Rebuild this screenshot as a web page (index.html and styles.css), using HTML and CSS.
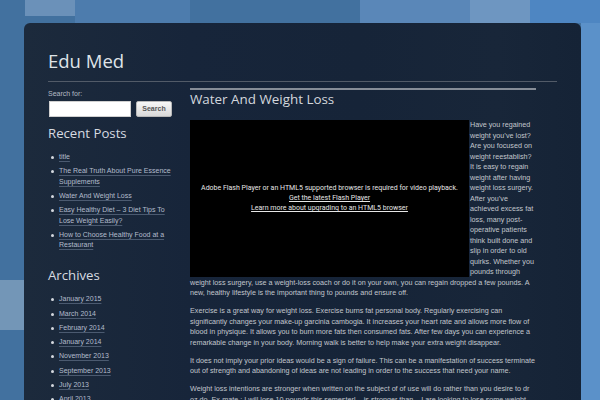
FILE: index.html
```html
<!DOCTYPE html>
<html>
<head>
<meta charset="utf-8">
<link rel="stylesheet" href="styles.css">
</head>
<body>
<div class="page">
  <header class="site-header">
    <h1 class="site-title">Edu Med</h1>
  </header>
  <div class="columns">
    <aside class="sidebar">
      <form class="search">
        <label class="search-label">Search for:</label>
        <div class="search-row">
          <input class="search-input" type="text">
          <button class="search-btn" type="button">Search</button>
        </div>
      </form>
      <h3 class="widget-title">Recent Posts</h3>
      <ul class="widget-list">
        <li><a href="#">title</a></li>
        <li><a href="#">The Real Truth About Pure Essence Supplements</a></li>
        <li><a href="#">Water And Weight Loss</a></li>
        <li><a href="#">Easy Healthy Diet – 3 Diet Tips To Lose Weight Easily?</a></li>
        <li><a href="#">How to Choose Healthy Food at a Restaurant</a></li>
      </ul>
      <h3 class="widget-title">Archives</h3>
      <ul class="widget-list">
        <li><a href="#">January 2015</a></li>
        <li><a href="#">March 2014</a></li>
        <li><a href="#">February 2014</a></li>
        <li><a href="#">January 2014</a></li>
        <li><a href="#">November 2013</a></li>
        <li><a href="#">September 2013</a></li>
        <li><a href="#">July 2013</a></li>
        <li><a href="#">April 2013</a></li>
      </ul>
    </aside>
    <main class="main">
      <h2 class="post-title">Water And Weight Loss</h2>
      <div class="post-body">
        <div class="video">
          <div class="video-msg">
            <div>Adobe Flash Player or an HTML5 supported browser is required for video playback.</div>
            <div><a href="#">Get the latest Flash Player </a></div>
            <div><a href="#">Learn more about upgrading to an HTML5 browser</a></div>
          </div>
        </div>
        <p>Have you regained weight you’ve lost? Are you focused on weight reestablish? It is easy to regain weight after having weight loss surgery. After you’ve achieved excess fat loss, many post-operative patients think built done and slip in order to old quirks. Whether you pounds through weight loss surgery, use a weight-loss coach or do it on your own, you can regain dropped a few pounds. A new, healthy lifestyle is the important thing to pounds and ensure off.</p>
        <p>Exercise is a great way for weight loss. Exercise burns fat personal body. Regularly exercising can significantly changes your make-up garcinia cambogia. It increases your heart rate and allows more flow of blood in physique. It allows you to burn more fats then consumed fats. After few days you can experience a remarkable change in your body. Morning walk is better to help make your extra weight disappear.</p>
        <p>It does not imply your prior ideas would be a sign of failure. This can be a manifestation of success terminate out of strength and abandoning of ideas are not leading in order to the success that need your name.</p>
        <p>Weight loss intentions are stronger when written on the subject of of use will do rather than you desire to dr oz do. Ex-mate.: I will lose 10 pounds this semester! – is stronger than – I are looking to lose some weight this semester.</p>
      </div>
    </main>
  </div>
</div>
</body>
</html>
```
FILE: styles.css
```css
html, body {
  margin: 0;
  padding: 0;
  height: 100%;
  overflow: hidden;
}
body {
  background-color: #42719f;
  background-image:
    linear-gradient(#6b91b9, #6b91b9),
    linear-gradient(#4d7cad, #4d7cad),
    linear-gradient(#5a87b8, #5a87b8),
    linear-gradient(#6e96c1, #6e96c1),
    linear-gradient(#7396b7, #7396b7),
    linear-gradient(#4e86c2, #4e86c2),
    linear-gradient(#5b91c9, #5b91c9);
  background-size:
    50px 16px,
    115px 23px,
    110px 23px,
    60px 23px,
    24px 50px,
    70px 23px,
    19px 400px;
  background-position:
    25px 0,
    75px 0,
    360px 0,
    470px 0,
    0 280px,
    530px 0,
    581px 0;
  background-repeat: no-repeat;
  font-family: "Liberation Sans", Arial, sans-serif;
  color: #c2c6cd;
}
.page {
  margin: 23px 0 0 24px;
  width: 509px;
  height: 420px;
  padding: 0 24px;
  border-radius: 6px 6px 0 0;
  background: linear-gradient(90deg, #1c2a3c 0%, #17253a 30%, #162438 60%, #182639 85%, #152336 100%);
}
.site-header {
  padding-top: 28px;
  padding-bottom: 11px;
  border-bottom: 1px solid #525b68;
}
.site-title {
  margin: 0;
  font-family: "Open Sans", "DejaVu Sans", sans-serif;
  font-weight: 400;
  font-size: 18.5px;
  line-height: 19px;
  color: #dfe3e8;
}
.columns {
  display: flex;
  gap: 18px;
  margin-top: 6px;
}
.sidebar {
  width: 124px;
  flex: none;
  font-size: 7px;
  line-height: 10.5px;
  padding-top: 0.5px;
}
.search-label {
  display: block;
  color: #b4bac4;
}
.search-row {
  display: flex;
  gap: 5px;
  margin-top: 1.5px;
}
.search-input {
  width: 82px;
  height: 16px;
  box-sizing: border-box;
  margin: 0 0 0 1px;
  border: 1px solid #d0d0d0;
  background: #fff;
  padding: 0;
}
.search-btn {
  width: 36px;
  height: 16px;
  box-sizing: border-box;
  margin: 0;
  padding: 0;
  border: 1px solid #b8b8b8;
  border-radius: 2px;
  background: linear-gradient(#f7f7f7, #d9d9d9);
  font-family: "Liberation Sans", Arial, sans-serif;
  font-size: 7px;
  font-weight: bold;
  color: #555;
}
.widget-title {
  margin: 8px 0 11.3px;
  font-family: "Open Sans", "DejaVu Sans", sans-serif;
  font-weight: 400;
  font-size: 13.2px;
  line-height: 16px;
  color: #d7dbe1;
}
.widget-list + .widget-title {
  margin-top: 16px;
}
.widget-list {
  margin: 0;
  padding: 0 0 0 11px;
  list-style: none;
}
.widget-list li {
  position: relative;
  margin-bottom: 3.8px;
}
.widget-list li::before {
  content: "";
  position: absolute;
  left: -8px;
  top: 4px;
  width: 3px;
  height: 3px;
  border-radius: 50%;
  background: #d4d8de;
}
.widget-list a {
  color: #b3bccc;
  text-decoration: underline;
  text-decoration-color: #4b5a70;
  text-underline-offset: 2px;
}
.main {
  width: 346px;
  flex: none;
  border-top: 2px solid #868d97;
}
.post-title {
  margin: 1px 0 13px;
  font-family: "Open Sans", "DejaVu Sans", sans-serif;
  font-weight: 400;
  font-size: 13.4px;
  line-height: 16px;
  color: #d3d7dd;
}
.post-body {
  font-size: 7.2px;
  line-height: 10.5px;
}
.post-body p {
  margin: 0 0 7.5px;
}
.video {
  float: left;
  width: 279px;
  height: 157px;
  margin-right: 1px;
  background: #000;
  display: flex;
  align-items: center;
  justify-content: center;
  text-align: center;
}
.video-msg {
  font-family: Roboto, "Liberation Sans", sans-serif;
  font-size: 7px;
  line-height: 10px;
  color: #e6e6e6;
  margin-top: -1px;
}
.video-msg a {
  color: #e6e6e6;
  text-decoration: underline;
}
```
